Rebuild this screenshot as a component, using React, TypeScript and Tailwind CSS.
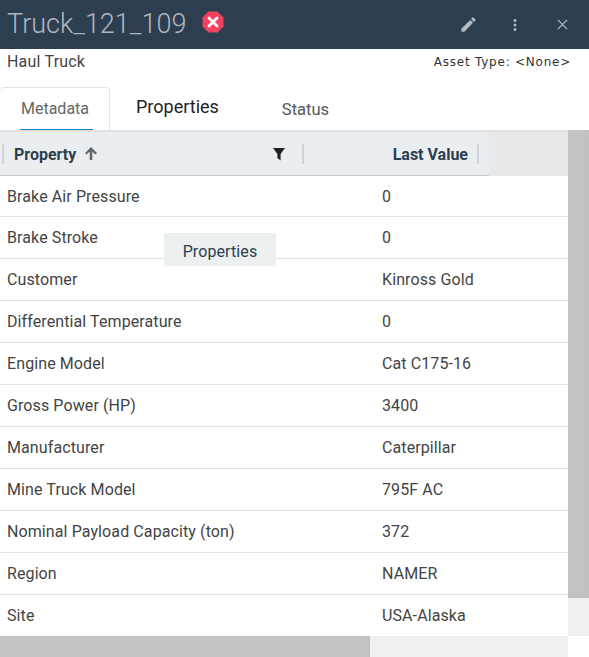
const rows = [
  ["Brake Air Pressure", "0"],
  ["Brake Stroke", "0"],
  ["Customer", "Kinross Gold"],
  ["Differential Temperature", "0"],
  ["Engine Model", "Cat C175-16"],
  ["Gross Power (HP)", "3400"],
  ["Manufacturer", "Caterpillar"],
  ["Mine Truck Model", "795F AC"],
  ["Nominal Payload Capacity (ton)", "372"],
  ["Region", "NAMER"],
  ["Site", "USA-Alaska"],
]

export default function App() {
  return (
    <div className="w-[589px] h-[657px] overflow-hidden bg-white font-['Roboto',sans-serif] text-[16px] text-[#444]">
      {/* Title bar */}
      <div className="h-[49px] bg-[#2c3e50] flex items-center">
        <span className="ml-[7px] text-[27px] font-light leading-none text-[#b0b7bd] -mt-[1px]">Truck_121_109</span>
        <svg className="ml-[16px] -mt-[5px]" width="22" height="22" viewBox="0 0 22 22">
          <path d="M6.5 0.5h9l6 6v9l-6 6h-9l-6-6v-9z" fill="#f2425f" />
          <path d="M7 7l8 8M15 7l-8 8" stroke="#fff" strokeWidth="2.8" strokeLinecap="round" />
        </svg>
        <div className="ml-auto flex items-center text-[#b4bac0]">
          <svg width="19" height="19" viewBox="0 0 24 24" fill="currentColor">
            <path d="M3 17.25V21h3.75L17.81 9.94l-3.75-3.75L3 17.25zM20.71 7.04a1 1 0 0 0 0-1.41l-2.34-2.34a1 1 0 0 0-1.41 0l-1.83 1.83 3.75 3.75 1.83-1.83z" />
          </svg>
          <svg className="ml-[28px]" width="18" height="18" viewBox="0 0 24 24" fill="currentColor">
            <path d="M12 8a2 2 0 1 0 0-4 2 2 0 0 0 0 4zm0 2a2 2 0 1 0 0 4 2 2 0 0 0 0-4zm0 6a2 2 0 1 0 0 4 2 2 0 0 0 0-4z" />
          </svg>
          <svg className="ml-[33px] mr-[21px]" width="11" height="11" viewBox="0 0 12 12" stroke="currentColor" strokeWidth="1.4" fill="none">
            <path d="M1 1l10 10M11 1L1 11" />
          </svg>
        </div>
      </div>

      {/* Asset line */}
      <div className="h-[38px] flex items-start justify-between pl-[7px] pr-[18px] pt-[4px]">
        <span className="text-[16px] leading-[18px] tracking-[0.2px] text-[#444]">Haul Truck</span>
        <span className="font-['DejaVu_Sans',sans-serif] text-[12px] leading-[18px] tracking-[0.76px] text-[#333]">Asset Type: &lt;None&gt;</span>
      </div>

      {/* Tabs */}
      <div className="h-[43px] flex items-stretch">
        <div className="w-[110px] rounded-t-[4px] border border-b-0 border-[#e2e4e6] border-l-0 flex flex-col items-center">
          <span className="mt-[12px] ml-[1px] text-[16px] leading-[18px] text-[#666]">Metadata</span>
          <div className="mt-auto ml-[3px] w-[73px] h-[1px] bg-[#1a7fc4]" />
        </div>
        <span className="ml-[26px] mt-[9px] text-[18px] leading-[22px] text-[#222]">Properties</span>
        <span className="ml-[63px] mt-[14px] text-[16.5px] leading-[18px] text-[#555]">Status</span>
      </div>

      {/* Grid */}
      <div className="relative h-[527px] flex flex-col">
        <div className="h-[506px] flex">
          <div className="w-[568px] flex flex-col">
            <div className="h-[46px] bg-[#e9e9e9] border-t-2 border-[#dfe1e3] flex items-start">
              <div className="w-[489px] h-[44px] bg-[#ebeef0] border-b border-[#c4c8ca] flex items-center font-bold text-[16px] text-[#2c3e50]">
                <div className="ml-[2px] w-[2px] h-[20px] bg-[#cfd3d6]" />
                <span className="ml-[10px] mt-[2px]">Property</span>
                <svg className="ml-[8px]" width="14" height="15" viewBox="0 0 14 15" fill="#666">
                  <path d="M7 1L1 7l1.6 1.6L5.7 5.5V14h2.6V5.5l3.1 3.1L13 7z" />
                </svg>
                <svg className="ml-[174px]" width="14" height="14" viewBox="0 0 14 14" fill="#222">
                  <path d="M1 1h12L8.6 7v6.5L5.4 11V7z" />
                </svg>
                <div className="ml-[16px] w-[2px] h-[20px] bg-[#cfd3d6]" />
                <span className="ml-auto mt-[2px]">Last Value</span>
                <div className="ml-[9px] mr-[10px] w-[2px] h-[20px] bg-[#cfd3d6]" />
              </div>
            </div>
            {rows.map(([name, value], i) => (
              <div key={name} className={`${i === 0 || i === rows.length - 1 ? "h-[41px]" : "h-[42px]"} pt-[1px] flex items-center border-b border-[#e2e2e2] last:border-b-0 text-[16px] text-[#444] tracking-[0.1px]`}>
                <span className="w-[382px] pl-[7px]">{name}</span>
                <span>{value}</span>
              </div>
            ))}
          </div>
          <div className="w-[21px] flex flex-col bg-[#f0f0f0]">
            <div className="h-[468px] bg-[#c4c4c4] border-r-[4px] border-b-[4px] border-[#c0c0c0]" />
          </div>
        </div>
        <div className="h-[21px] flex">
          <div className="w-[370px] bg-[#c4c4c4] border-r-[3px] border-[#c0c0c0]" />
          <div className="w-[198px] bg-[#f0f0f0]" />
        </div>

        {/* Hover tooltip */}
        <div className="absolute left-[164px] top-[103px] w-[112px] h-[33px] bg-[#ecf0f1] pt-[4px] flex items-center justify-center text-[16px] tracking-[0.1px] text-[#2c3e50]">
          Properties
        </div>
      </div>
    </div>
  )
}
